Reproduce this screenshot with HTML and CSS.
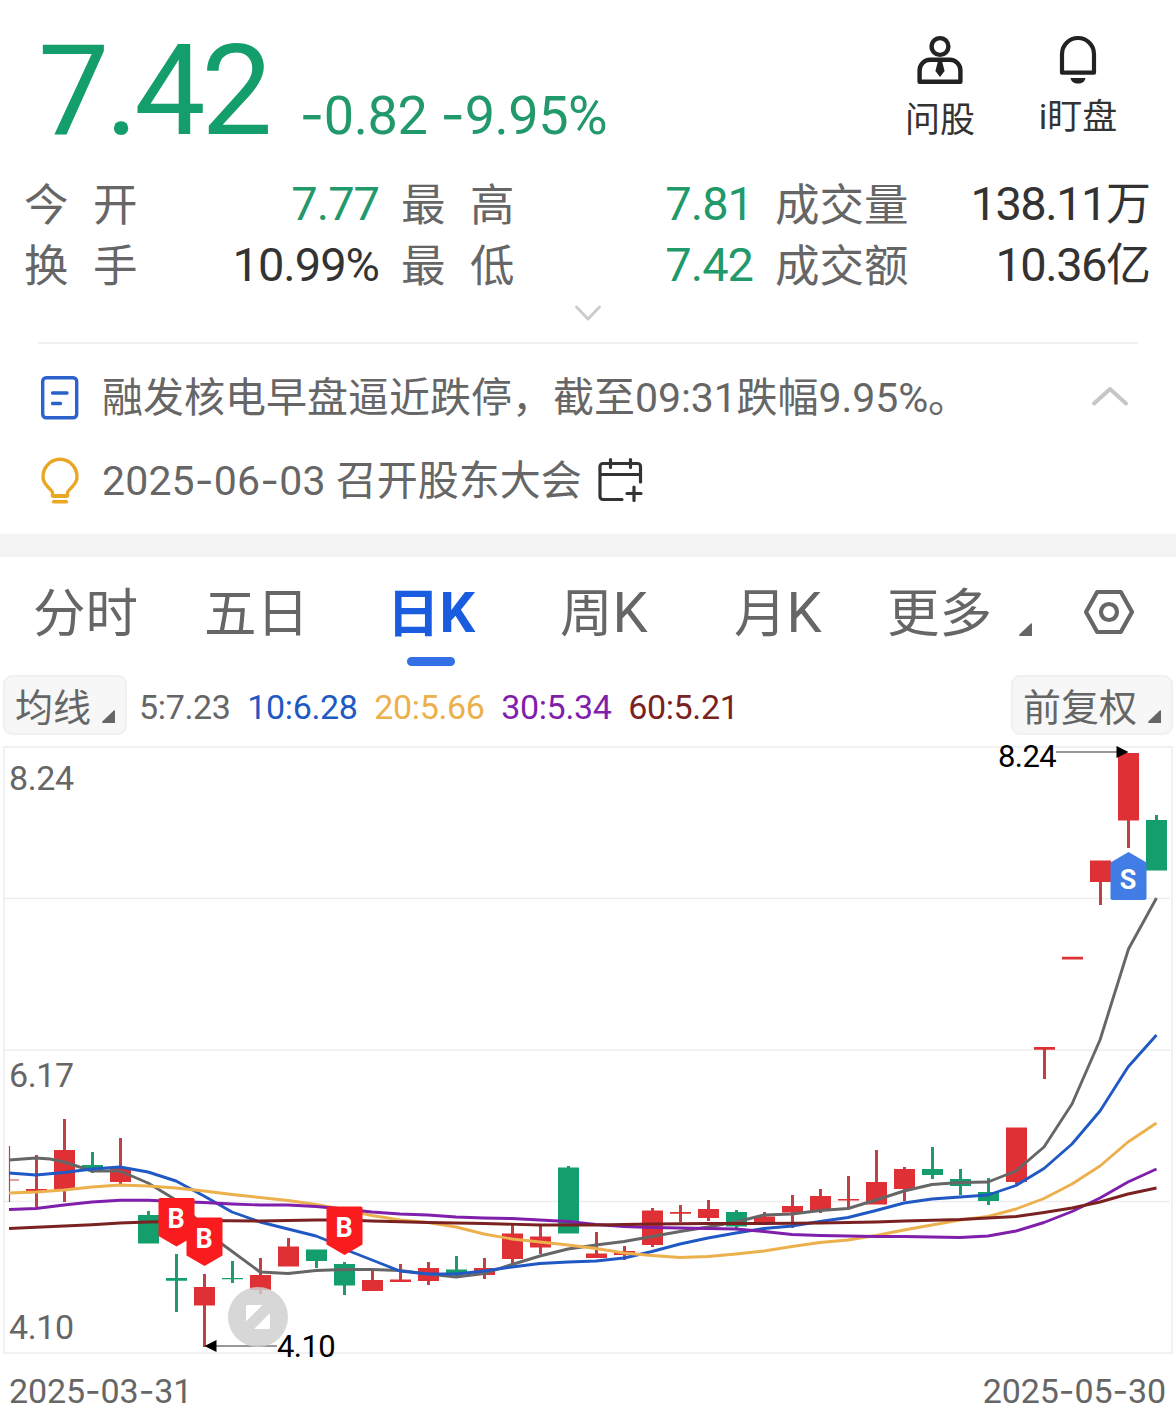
FILE: index.html
```html
<!DOCTYPE html>
<html lang="zh-CN">
<head>
<meta charset="utf-8">
<title>融发核电 日K</title>
<link rel="stylesheet" href="styles.css">
</head>
<body>
<main class="page">
  <header class="quote">
    <div class="price-group">
      <span class="price">7.42</span>
      <span class="change"><span class="dash">-</span>0.82 <span class="dash">-</span>9.95%</span>
    </div>
    <nav class="actions">
      <div class="action ask">
        <svg width="48" height="50" viewBox="0 0 48 50" fill="none" stroke="#222" stroke-width="4.4">
          <circle cx="24" cy="11.5" r="8.4"/>
          <path d="M3.6 46.8V35.5a10.5 10.5 0 0 1 10.5-10.7h19.8a10.5 10.5 0 0 1 10.5 10.7v11.3z" stroke-linejoin="round"/>
          <path d="M22 26h4l2.6 10-4.6 6-4.6-6z" fill="#222" stroke="none"/>
        </svg>
        <span>问股</span>
      </div>
      <div class="action watch">
        <svg width="48" height="50" viewBox="0 0 48 50" fill="none">
          <path d="M8 37.700V19a16 16 0 0 1 32 0v18.700z" stroke="#222" stroke-width="4.200" stroke-linejoin="round"/>
          <path d="M16.500 43h15c-.8 3.700-3.500 5.600-7.500 5.600s-6.700-1.900-7.500-5.600z" fill="#222"/>
        </svg>
        <span>i盯盘</span>
      </div>
    </nav>
  </header>

  <section class="stats">
    <div class="stat"><span class="label wide">今开</span><span class="value down">7.77</span></div>
    <div class="stat"><span class="label wide">最高</span><span class="value down">7.81</span></div>
    <div class="stat"><span class="label">成交量</span><span class="value total">138.11<span class="unit">万</span></span></div>
    <div class="stat"><span class="label wide">换手</span><span class="value">10.99%</span></div>
    <div class="stat"><span class="label wide">最低</span><span class="value down">7.42</span></div>
    <div class="stat"><span class="label">成交额</span><span class="value total">10.36<span class="unit">亿</span></span></div>
  </section>
  <div class="expand">
    <svg width="28" height="18" viewBox="0 0 28 18" fill="none" stroke="#ccc" stroke-width="3" stroke-linecap="round" stroke-linejoin="round"><path d="M2.500 3 14 15 25.500 3"/></svg>
  </div>

  <section class="news">
    <div class="news-row">
      <svg class="news-icon" width="40" height="48" viewBox="0 0 40 48" fill="none" stroke="#2b62cc" stroke-width="3.400">
        <rect x="2.700" y="3.700" width="34" height="40" rx="3.500"/>
        <path d="M12.500 19h14.500M12.500 29.500h8" stroke-linecap="round"/>
      </svg>
      <span class="news-text">融发核电早盘逼近跌停，截至<span class="num">09:31</span>跌幅<span class="num">9.95%</span>。</span>
      <svg class="collapse" width="40" height="24" viewBox="0 0 40 24" fill="none" stroke="#c6c6c6" stroke-width="4" stroke-linecap="round" stroke-linejoin="round"><path d="M4 18.500 20 4 36 18.500"/></svg>
    </div>
    <div class="news-row">
      <svg class="news-icon" width="40" height="48" viewBox="0 0 40 48" fill="none" stroke="#e9a723" stroke-width="3.400">
        <path d="M12.500 39v-3.500c0-2-7-6-9.300-13A17 17.500 0 0 1 20 2.300 17 17.500 0 0 1 36.800 22.500c-2.300 7-9.300 11-9.300 13V39z" stroke-linejoin="round"/>
        <path d="M13.500 39h13" stroke-width="4"/>
        <path d="M13.500 44.800h13" stroke-linecap="round"/>
      </svg>
      <span class="news-text"><span class="date">2025<span class="dash">-</span>06<span class="dash">-</span>03</span> 召开股东大会</span>
      <svg class="calendar" width="46" height="48" viewBox="0 0 46 48" fill="none" stroke="#333" stroke-width="3.200" stroke-linecap="round" stroke-linejoin="round">
        <path d="M25 43.500H6a3 3 0 0 1-3-3V10.500a3 3 0 0 1 3-3h34.500a3 3 0 0 1 3 3V26M3 18.500H43.500M13.500 3.500v8M33.500 3.500v8M30 37.500h14M37 31v13.500"/>
      </svg>
    </div>
  </section>

  <nav class="tabs">
    <span class="tab t1">分时</span>
    <span class="tab t2">五日</span>
    <span class="tab t3 active">日<span class="k">K</span></span>
    <span class="tab t4">周<span class="k">K</span></span>
    <span class="tab t5">月<span class="k">K</span></span>
    <span class="tab t6">更多</span>
    <svg class="corner" width="13" height="13" viewBox="0 0 13 13"><path d="M.3 11.500Q-.3 13 1.500 13H13V1q0-1-1.200-.5z" fill="#666"/></svg>
    <svg class="settings" width="52" height="48" viewBox="0 0 52 48" fill="none" stroke="#666" stroke-width="4.200" stroke-linejoin="round"><path d="M14.200 4h23.600L49 24 37.800 44H14.200L3 24z"/><circle cx="26" cy="24" r="8"/></svg>
  </nav>

  <section class="indicators">
    <div class="picker ma"><span>均线</span><svg width="13" height="13" viewBox="0 0 13 13"><path d="M.3 11.500Q-.3 13 1.500 13H13V1q0-1-1.200-.5z" fill="#666"/></svg></div>
    <div class="averages">
      <span class="ma5">5:7.23</span>
      <span class="ma10">10:6.28</span>
      <span class="ma20">20:5.66</span>
      <span class="ma30">30:5.34</span>
      <span class="ma60">60:5.21</span>
    </div>
    <div class="picker adjust"><span>前复权</span><svg width="13" height="13" viewBox="0 0 13 13"><path d="M.3 11.500Q-.3 13 1.500 13H13V1q0-1-1.200-.5z" fill="#666"/></svg></div>
  </section>

  <svg class="chart" width="1176" height="630" viewBox="0 738 1176 630">
    <g fill="none" stroke="#ededed">
      <path d="M4 898.500H1170M4 1050H1170M4 1201.500H1170" stroke-width="1.500"/>
      <rect x="4" y="747" width="1168" height="606" stroke-width="1.500"/>
    </g>
    <g class="axis-label"><text x="9" y="790">8.24</text><text x="9" y="1087">6.17</text><text x="9" y="1339">4.10</text></g>

    <path d="M9.500 1146V1202M9 1180H19" stroke="#c04045" stroke-width="1.200"/>
    <g class="wick up">
      <path d="M36.500 1155V1207M64.500 1119V1202M120.500 1138V1184M204.500 1274V1347M260.500 1258V1294M288.500 1238V1260M372.500 1270V1285M400.500 1264V1281M428.500 1262V1285M484.500 1258V1279M512.500 1225V1264M540.500 1226V1254M596.500 1232V1256M624.500 1246V1260M652.500 1208V1247M680.500 1205V1222M708.500 1200V1221M764.500 1212V1220M792.500 1195V1228M820.500 1189V1213M848.500 1176V1208M876.500 1150V1190M904.500 1167V1201M1016.500 1175V1184M1044.500 1048V1079M1100.500 870V905M1128.500 810V848"/>
    </g>
    <g class="wick dn">
      <path d="M92.500 1152V1173M148.500 1211V1230M176.500 1254V1312M232.500 1261V1283M316.500 1255V1268M344.500 1262V1295M456.500 1256V1278M568.500 1166V1180M736.500 1210V1228M932.500 1147V1179M960.500 1169V1195M988.500 1178V1205M1156.500 815V840"/>
    </g>
    <g class="body-up">
      <path d="M26 1189h21v2.500h-21zM54 1150h21v40h-21zM110 1168h21v14h-21zM194 1287h21v18.500h-21zM250 1275h21v15h-21zM278 1246.500h21v20h-21zM362 1280h21v11h-21zM390 1279.500h21v2.500h-21zM418 1268h21v13h-21zM474 1268h21v7h-21zM502 1233.500h21v25.500h-21zM530 1236.500h21v11h-21zM586 1253.500h21v4.500h-21zM614 1251h21v4h-21zM642 1210.500h21v34.500h-21zM670 1212h21v1.700h-21zM698 1209h21v9h-21zM754 1216.500h21v6.500h-21zM782 1206h21v6.500h-21zM810 1196h21v15h-21zM838 1199h21v1.500h-21zM866 1182h21v22.500h-21zM894 1169h21v20h-21zM1006 1127.500h21v54.500h-21zM1034 1047h21v2.700h-21zM1062 956.700h21v2.800h-21zM1090 860.500h21v21.500h-21zM1118 753h21v67.500h-21z"/>
    </g>
    <g class="body-dn">
      <path d="M82 1165h21v5h-21zM138 1215h21v28.500h-21zM166 1278h21v2.700h-21zM222 1278h21v1.300h-21zM306 1249.500h21v11.500h-21zM334 1264h21v21.500h-21zM446 1269.500h21v5h-21zM558 1167.500h21v66h-21zM726 1212h21v14.500h-21zM922 1169h21v6h-21zM950 1179h21v7h-21zM978 1192h21v9h-21zM1146 820h21v50.500h-21z"/>
    </g>

    <g class="ma-line">
      <polyline class="l5" points="9,1160 36,1158 50,1159 64,1162 92,1171 120,1171 148,1183 176,1200 204,1226 222,1244 260,1272 288,1273.500 316,1270.500 344,1269.500 372,1269.500 400,1270.500 428,1274 456,1277 484,1273.500 512,1264.500 540,1256 568,1249 596,1245 624,1241.500 652,1236.500 680,1231.500 708,1227 736,1222 764,1215 792,1214 820,1210.500 848,1208.500 876,1200 904,1191 932,1184.500 960,1182.500 988,1182 1016,1171 1044,1147 1072,1104 1100,1040 1128.500,949 1156.500,898"/>
      <polyline class="l10" points="9,1173 36,1175 64,1172.500 92,1169 120,1167 148,1172 176,1181 204,1196 232,1212 260,1222 288,1229 316,1236 326,1240 344,1249 372,1260 400,1271 428,1274 456,1274 484,1271 512,1267 540,1263.500 568,1262 596,1261 624,1258 652,1251.500 680,1244 708,1238 736,1233 764,1228.500 792,1226 820,1221.500 848,1217.500 876,1210.500 904,1203 932,1199 960,1197 988,1195 1016,1185.500 1044,1168.500 1072,1144 1100,1111 1128,1067 1156.500,1035"/>
      <polyline class="l20" points="9,1193 36,1192 64,1190 92,1187 120,1185 148,1186 176,1188 204,1191 232,1194.500 260,1197.500 288,1200.500 316,1204.500 344,1209.500 372,1215.500 400,1220 428,1222.500 456,1227 484,1234 512,1239 540,1242 568,1245 596,1248.500 624,1253 652,1255.500 680,1257.500 708,1256.500 736,1254 764,1251 792,1246.500 820,1242.500 848,1240 876,1235.500 904,1230 932,1225 960,1220 988,1216.500 1016,1209 1044,1198.500 1072,1184 1100,1166 1128,1142 1156.500,1123"/>
      <polyline class="l30" points="9,1209.500 36,1208.500 64,1205 92,1202 120,1200.200 148,1200.300 176,1201.500 204,1202.500 232,1204 260,1205 288,1205 316,1206.500 344,1209 372,1212 400,1214 428,1215 456,1217 484,1218 512,1218.500 540,1220 568,1221.500 596,1224.500 624,1226.500 652,1227.500 680,1228 708,1228.500 736,1229 764,1231.500 792,1234.500 820,1235.500 848,1236 876,1236.500 904,1236.500 932,1237 960,1237.500 988,1236 1016,1231 1044,1222.500 1072,1211.500 1100,1198 1128,1182 1156.500,1169"/>
      <polyline class="l60" points="9,1228.500 36,1227.300 64,1226 92,1224.700 120,1223 148,1222 176,1221.500 204,1220.500 260,1221 316,1220 344,1220 372,1221 428,1222.500 484,1223.500 540,1225 596,1225 652,1224 708,1223.500 764,1223.500 820,1223 876,1222 904,1221 960,1219.500 1016,1216.500 1044,1212.500 1072,1208 1100,1202 1128,1194 1156.500,1188"/>
    </g>

    <g class="flag">
      <path d="M160 1198h33q1.500 0 1.500 1.500V1236l-18 10.500-18-10.500V1199.500q0-1.500 1.500-1.500z" fill="#fa1b1e"/>
      <path d="M188 1217.500h33q1.500 0 1.500 1.500V1255.500l-18 10.500-18-10.500V1219q0-1.500 1.500-1.500z" fill="#fa1b1e"/>
      <path d="M328 1206.500h33q1.500 0 1.500 1.500V1244.500l-18 10.500-18-10.500V1208q0-1.500 1.500-1.500z" fill="#fa1b1e"/>
      <path d="M1128.500 852l18 10.500V898q0 2-2 2h-32q-2 0-2-2V862.500z" fill="#427de5"/>
      <text x="176" y="1228">B</text><text x="204" y="1248">B</text><text x="344" y="1237">B</text><text x="1128" y="889">S</text>
    </g>

    <g class="extreme">
      <path d="M1056 752H1118M277 1346H215" stroke="#777" stroke-width="1.500"/>
      <path d="M1128.500 752l-12-6v12zM204.500 1346l12-6v12z"/>
      <text x="998" y="767">8.24</text><text x="277" y="1357">4.10</text>
    </g>

    <circle cx="258" cy="1317" r="30" fill="#cfcfcf" fill-opacity=".84"/>
    <path d="M247 1305.500h14.500L246.500 1320.500V1306zM269.500 1314v14.500H255z" fill="#fff" stroke="#fff" stroke-linejoin="round"/>
  </svg>

  <footer class="dates">
    <span>2025<span class="dash">-</span>03<span class="dash">-</span>31</span>
    <span>2025<span class="dash">-</span>05<span class="dash">-</span>30</span>
  </footer>
</main>
</body>
</html>
```

FILE: styles.css
```css
* { box-sizing: border-box; }
body {
  margin: 0;
  background: #fff;
  color: #666;
  font-family: Roboto, "Noto Sans CJK SC", sans-serif;
}
svg { display: block; flex: none; }
.page { width: 1176px; height: 1418px; overflow: hidden; }
.dash { font-family: Inter, sans-serif; line-height: 1; }

.quote { display: flex; justify-content: space-between; height: 173px; }
.price-group { display: flex; align-items: baseline; padding: 16px 0 0 38px; height: 173px; color: #149e6b; white-space: nowrap; }
.price { font-size: 127px; line-height: 150px; letter-spacing: -4.300px; }
.change { margin-left: 31px; font-size: 54px; letter-spacing: -.450px; color: #22996b; }
.actions { display: flex; padding-right: 53px; color: #333; font-size: 35px; }
.action { display: flex; flex-direction: column; align-items: center; width: 90px; padding-top: 35px; white-space: nowrap; }
.action span { line-height: 40px; }
.ask span { margin-top: 16px; }
.watch { margin-left: 48px; }
.watch span { margin-top: 13px; }

.stats { display: grid; grid-template-columns: 355px 352px 376px; column-gap: 22px; padding-left: 24px; }
.stat { display: flex; justify-content: space-between; height: 61px; line-height: 61px; white-space: nowrap; }
.label { padding-top: 3px; font-size: 44.500px; }
.wide { letter-spacing: 24.500px; }
.value { font-size: 47px; letter-spacing: -1px; color: #333; }
.value.down { color: #22996b; }
.total { letter-spacing: -1.500px; }
.unit { font-size: 45px; letter-spacing: 0; }
.expand { display: flex; justify-content: center; height: 47px; padding-top: 9px; }

.news { margin: 0 38px; padding-top: 11px; height: 192px; border-top: 2px solid #f0f0f0; }
.news-row { display: flex; align-items: center; height: 83px; font-size: 41px; line-height: 60px; white-space: nowrap; }
.news-icon { margin: 2px 22px 0 2px; }
.news-text { padding-top: 2px; }
.num { letter-spacing: -.1px; }
.date { letter-spacing: .150px; }
.collapse { margin-left: auto; margin-right: 8px; }
.calendar { margin-left: 15px; }

.tabs { display: flex; align-items: center; height: 141px; border-top: 23px solid #f4f4f4; padding: 0 0 10px 33px; font-size: 52.500px; white-space: nowrap; }
.tab { position: relative; line-height: 80px; padding-top: 6px; }
.t1 { width: 171px; }
.t2 { width: 183px; }
.t3 { width: 173px; }
.t4 { width: 174px; }
.t5 { width: 153px; }
.t6 { width: 132px; }
.k { font-size: 56px; line-height: 1; }
.active { color: #1a5ce0; font-weight: 700; }
.active::after { content: ""; position: absolute; left: 20px; top: 89px; width: 48px; height: 9px; border-radius: 5px; background: #3370e6; }
.corner { margin-top: 36px; }
.settings { margin: 1px 0 0 51px; }

.indicators { display: flex; justify-content: space-between; height: 63px; padding: 0 3px 3px; }
.picker { display: flex; align-items: center; height: 60px; padding: 0 10px; border: 2px solid #f0f0f0; border-radius: 9px; background: #f7f7f7; font-size: 38px; line-height: 50px; white-space: nowrap; }
.picker span { padding-top: 5px; }
.picker svg { margin: 22px 0 0 11px; }
.averages { display: flex; flex: 1; align-items: center; gap: 16.700px; padding: 4px 0 0 12px; font-size: 34px; letter-spacing: -.350px; }
.ma5 { color: #666; }
.ma10 { color: #2058c4; }
.ma20 { color: #ecb04c; }
.ma30 { color: #7f1fab; }
.ma60 { color: #7a2222; }

.chart { font-family: Roboto, sans-serif; }
.axis-label { font-size: 34px; letter-spacing: -.400px; fill: #666; }
.wick { fill: none; stroke-width: 3; }
.wick.up { stroke: #c04045; }
.wick.dn { stroke: #22996b; }
.body-up { fill: #df3035; }
.body-dn { fill: #149e6b; }
.ma-line { fill: none; stroke-width: 2.900; stroke-linejoin: round; }
.l5 { stroke: #666; }
.l10 { stroke: #2058c4; }
.l20 { stroke: #ecb04c; }
.l30 { stroke: #7f1fab; }
.l60 { stroke: #7a2222; }
.flag text { fill: #fff; font-size: 27px; font-weight: 700; text-anchor: middle; }
.extreme { font-size: 31px; letter-spacing: -.600px; fill: #000; }

.dates { display: flex; justify-content: space-between; padding: 3px 10px 0 9px; font-size: 34px; line-height: 40px; letter-spacing: -.100px; }
```
